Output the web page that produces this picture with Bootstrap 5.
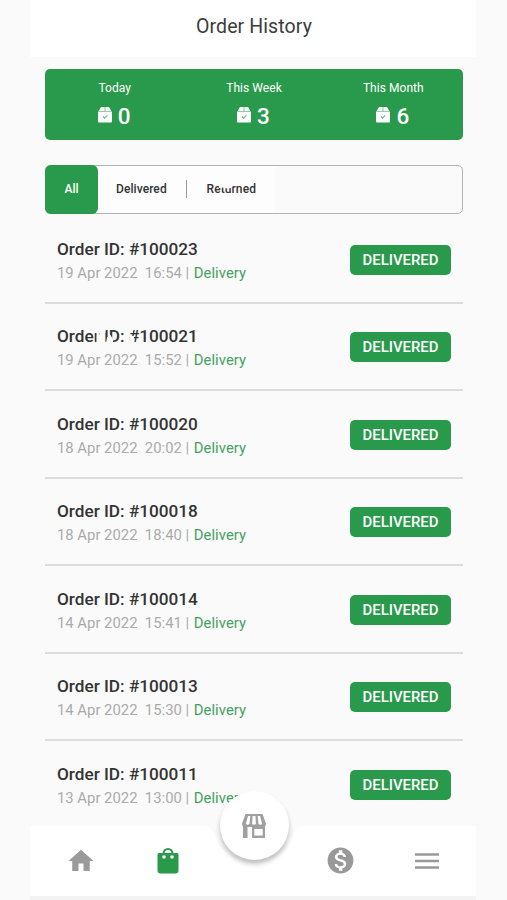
<!DOCTYPE html>
<html lang="en">
<head>
<meta charset="utf-8">
<meta name="viewport" content="width=device-width, initial-scale=1">
<title>Order History</title>
<link href="https://cdn.jsdelivr.net/npm/bootstrap@5.3.0/dist/css/bootstrap.min.css" rel="stylesheet">
<style>
:root{--green:#299a4b}
body{font-family:Roboto,"Liberation Sans",sans-serif;background:#fafafa;color:#333;height:900px;overflow:hidden}
.app{width:446px;height:900px;margin-left:30px}
.app-title{height:57px;padding:0 0 4px 2px;font-size:19.5px;color:#3c3c3c;letter-spacing:.1px}
.summary{height:71px;margin:12px 13px 0 15px;background:var(--green);border-radius:5px;padding-top:10px}
.summary-label{font-size:12px;line-height:18px;letter-spacing:.05px}
.summary-count{font-size:22.5px;line-height:32px;margin-top:3px;padding-right:1px;gap:6px;font-weight:500}
.summary-count svg{margin-top:-2px}
.filters{height:49px;margin:25px 13px 0 15px;border:1.5px solid #b4b4b4;border-radius:5px;font-size:12px;font-weight:500}
.filter-all{width:53px;margin:-1px 0 -1px -1px;padding-bottom:2px;background:var(--green);border-radius:6px}
.filter-rest{width:177px;padding:0 19px 1px 18px;background:#fdfdfd;letter-spacing:.08px}
.filter-sep{width:1px;height:18px;background:#999}
.smudge{left:0;top:0;width:100%;height:100%;fill:#fafafa}
.smudge-light{fill:#fdfdfd}
.orders{margin:2px 13px 0 15px}
.order{height:87.5px;padding:2px 12px 0 12px;border-bottom:2px solid #dcdcdc}
.order:last-child{border-bottom-color:transparent}
.order-id{font-size:17.2px;line-height:24px;font-weight:500;color:#333}
.order-meta{font-size:14.8px;line-height:24px;color:#aaa;white-space:pre;letter-spacing:.05px;word-spacing:-.1px}
.order-type{color:#46a062;margin-left:1px}
.order-text{padding-top:2px}
.status{width:101px;height:30px;border-radius:5px;background:var(--green);font-size:14.9px;font-weight:500}
.tabbar{left:30px;top:826px;width:446px;height:74px}
.tabbar-bg{left:0;top:0}
.shop-btn{left:189.5px;top:-35px;width:69px;height:69px;background:#fff;box-shadow:0 4px 5px rgba(0,0,0,.24)}
.tab-slot{width:86.4px}
.tab-row{padding:0 0 5px 2px}
</style>
<script src="https://cdn.jsdelivr.net/npm/bootstrap@5.3.0/dist/js/bootstrap.bundle.min.js"></script>
</head>
<body>
<svg class="d-none">
<symbol id="parcel" viewBox="0 0 14 16"><path fill="#fff" d="M3 0h3.700v4H.600zM7.300 0H11l2.400 4H7.300zM0 4.600h14v9.900q0 1-1 1H1q-1 0-1-1z"/><path d="M5 9.500l1.600 1.600L9.300 8.400" fill="none" stroke="#6ebc84" stroke-width="1.200"/></symbol>
</svg>
<main class="app">
<header class="app-title bg-white d-flex align-items-center justify-content-center">Order History</header>
<section class="summary text-white text-center d-flex">
<div class="col-4"><div class="summary-label">Today</div><div class="summary-count d-flex align-items-center justify-content-center"><svg width="14" height="16"><use href="#parcel"/></svg>0</div></div>
<div class="col-4"><div class="summary-label">This Week</div><div class="summary-count d-flex align-items-center justify-content-center"><svg width="14" height="16"><use href="#parcel"/></svg>3</div></div>
<div class="col-4"><div class="summary-label">This Month</div><div class="summary-count d-flex align-items-center justify-content-center"><svg width="14" height="16"><use href="#parcel"/></svg>6</div></div>
</section>
<nav class="filters d-flex">
<div class="filter-all text-white d-flex align-items-center justify-content-center">All</div>
<div class="filter-rest d-flex align-items-center justify-content-between"><span>Delivered</span><span class="filter-sep"></span><span class="position-relative">Returned<svg class="smudge smudge-light position-absolute"><path d="M12 3h14v3l-2 2-4 .5-4-1-4 .5z"/></svg></span></div>
</nav>
<section class="orders">
<div class="order d-flex align-items-center justify-content-between"><div class="order-text"><div class="order-id">Order ID: #100023</div><div class="order-meta">19 Apr 2022  16:54 | <span class="order-type">Delivery</span></div></div><span class="status text-white d-flex align-items-center justify-content-center">DELIVERED</span></div>
<div class="order d-flex align-items-center justify-content-between"><div class="order-text"><div class="order-id position-relative">Order ID: #100021<svg class="smudge position-absolute"><path d="M39.500 4h3v15h-3zM46 4h3l-1 6v9h-2zM50 13h3v6h-4zM52 9l4 6v4h-4zM73 12h4v7h-4zM73 4h3v5h-3z"/></svg></div><div class="order-meta">19 Apr 2022  15:52 | <span class="order-type">Delivery</span></div></div><span class="status text-white d-flex align-items-center justify-content-center">DELIVERED</span></div>
<div class="order d-flex align-items-center justify-content-between"><div class="order-text"><div class="order-id">Order ID: #100020</div><div class="order-meta">18 Apr 2022  20:02 | <span class="order-type">Delivery</span></div></div><span class="status text-white d-flex align-items-center justify-content-center">DELIVERED</span></div>
<div class="order d-flex align-items-center justify-content-between"><div class="order-text"><div class="order-id">Order ID: #100018</div><div class="order-meta">18 Apr 2022  18:40 | <span class="order-type">Delivery</span></div></div><span class="status text-white d-flex align-items-center justify-content-center">DELIVERED</span></div>
<div class="order d-flex align-items-center justify-content-between"><div class="order-text"><div class="order-id">Order ID: #100014</div><div class="order-meta">14 Apr 2022  15:41 | <span class="order-type">Delivery</span></div></div><span class="status text-white d-flex align-items-center justify-content-center">DELIVERED</span></div>
<div class="order d-flex align-items-center justify-content-between"><div class="order-text"><div class="order-id">Order ID: #100013</div><div class="order-meta">14 Apr 2022  15:30 | <span class="order-type">Delivery</span></div></div><span class="status text-white d-flex align-items-center justify-content-center">DELIVERED</span></div>
<div class="order d-flex align-items-center justify-content-between"><div class="order-text"><div class="order-id">Order ID: #100011</div><div class="order-meta">13 Apr 2022  13:00 | <span class="order-type">Delivery</span></div></div><span class="status text-white d-flex align-items-center justify-content-center">DELIVERED</span></div>
</section>
</main>
<nav class="tabbar position-absolute">
<svg class="tabbar-bg position-absolute" width="446" height="74"><path fill="#f3f3f3" d="M0 68h446v6H0z"/><path fill="#fff" d="M0 0H172Q181 0 184 7A41.500 41.500 0 0 0 264 7Q267 0 276 0H446V70H0z"/></svg>
<div class="tab-row d-flex position-relative justify-content-center align-items-center h-100">
<div class="tab-slot text-center"><svg width="30" height="30" viewBox="0 0 24 24" fill="#9a9a9a"><path d="M10 20v-6h4v6h5v-8h3L12 3 2 12h3v8z"/></svg></div>
<div class="tab-slot text-center"><svg width="24" height="28" viewBox="0 0 24 28"><path d="M7.500 6.500a4.500 4.500 0 0 1 9 0" fill="none" stroke="#299a4b" stroke-width="2"/><path fill="#299a4b" d="M3 6h18q1.500 0 1.500 1.500v16q0 3-3 3h-15q-3 0-3-3v-16Q1.500 6 3 6z"/><circle cx="8" cy="10" r="1.800" fill="#fff"/><circle cx="16" cy="10" r="1.800" fill="#fff"/></svg></div>
<div class="tab-slot"></div>
<div class="tab-slot text-center"><svg width="31" height="31" viewBox="0 0 24 24" fill="#999"><path d="M12 2C6.480 2 2 6.480 2 12s4.480 10 10 10 10-4.480 10-10S17.520 2 12 2zm1.410 16.090V20h-2.670v-1.930c-1.710-.360-3.160-1.460-3.270-3.400h1.960c.1 1.050.820 1.870 2.650 1.870 1.960 0 2.400-.980 2.400-1.590 0-.830-.440-1.610-2.670-2.140-2.480-.6-4.180-1.620-4.180-3.670 0-1.720 1.390-2.840 3.110-3.210V4h2.670v1.950c1.860.45 2.790 1.860 2.850 3.390H14.300c-.050-1.110-.640-1.870-2.220-1.870-1.500 0-2.400.680-2.400 1.640 0 .840.650 1.390 2.670 1.910s4.180 1.390 4.180 3.910c-.010 1.830-1.380 2.830-3.120 3.160z"/></svg></div>
<div class="tab-slot text-center"><svg width="24" height="20" viewBox="0 0 24 20" fill="none" stroke="#999" stroke-width="2.400"><path d="M0 3.500h24M0 10h24M0 16.500h24"/></svg></div>
</div>
<div class="shop-btn position-absolute rounded-circle d-flex align-items-center justify-content-center">
<svg width="26" height="26" viewBox="0 0 26 26" fill="#a0a0a0"><path d="M4.500 1h17l3.500 9.500q0 3.500-3 3.500H4q-3 0-3-3.500z"/><path fill="#fff" d="M7 3h2.300l-.8 8q-1.800 1.500-3.700 0zM11.600 3h2.800l.5 8q-1.900 1.500-3.800 0zM16.700 3H19l2.200 8q-1.900 1.500-3.700 0z"/><path d="M2 13h4.500v12H2zM11 13h13v12H11z"/><path fill="#fff" d="M13.300 16h8.400v6.500h-8.400z"/></svg>
</div>
</nav>
</body>
</html>
